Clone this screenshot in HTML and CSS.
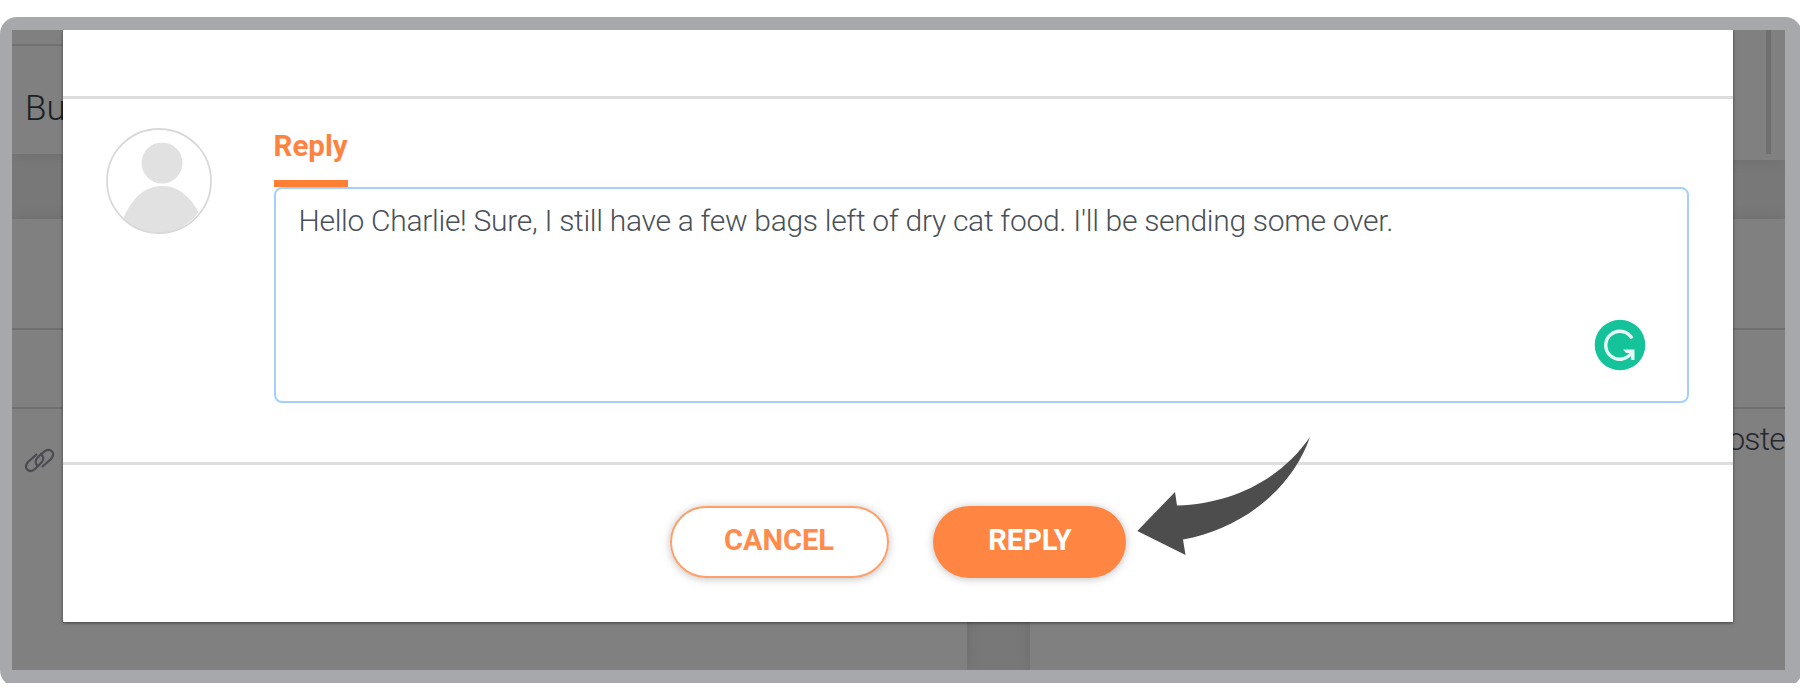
FILE: index.html
```html
<!DOCTYPE html>
<html lang="en">

<head>
    <meta charset="UTF-8">
    <meta name="viewport" content="width=device-width, initial-scale=1.0">
    <title>Reply</title>
    <link rel="stylesheet" href="styles.css">
</head>

<body>
    <div class="wrapper">
        <div class="frame">
            <!-- page behind the dialog -->
            <div class="page">
                <div class="column">
                    <div class="card card-top">
                        <div class="card-title">Bu</div>
                    </div>
                    <div class="card card-list">
                        <div class="list-head"></div>
                        <div class="list-row"></div>
                        <div class="list-body">
                            <svg class="link-icon" width="32" height="26" viewBox="0 0 32 26">
                                <path d="M13 6 L4 14 C-1 20 5 26 11 21 L17 15 C21 11 19 7 16 6" />
                                <path d="M18 19 L27 11 C32 5 27 0 21 3 L14 9 C10 13 12 17 14 18" />
                            </svg>
                        </div>
                    </div>
                </div>
                <div class="column">
                    <div class="card card-side">
                        <div class="scroll"></div>
                    </div>
                    <div class="card card-list">
                        <div class="list-head"></div>
                        <div class="list-row"></div>
                        <div class="list-body right">
                            <span class="posted">oste</span>
                        </div>
                    </div>
                </div>
            </div>

            <div class="modal">
                <div class="modal-header"></div>
                <div class="modal-body">
                    <svg class="avatar" width="106" height="106" viewBox="0 0 106 106">
                        <circle cx="56" cy="35" r="20.5" fill="#e1e1e1" />
                        <path d="M17.500 90 C26 70 39 58 56 58 C73 58 84 69 92.500 84 C83 97 69 105 53 105 C39 105 26 99 17.500 90 Z" fill="#e1e1e1" />
                        <circle cx="53" cy="53" r="52" fill="none" stroke="#d9d9d9" stroke-width="1.800" />
                    </svg>
                    <div class="form">
                        <div class="tab"><span>Reply</span></div>
                        <div class="textarea">
                            <p class="message">Hello Charlie! Sure, I still have a few bags left of dry cat food. I'll be sending some over.</p>
                            <svg class="grammar" width="52" height="52" viewBox="0 0 52 52">
                                <circle cx="26" cy="26" r="25.300" fill="#15c39a" />
                                <path d="M38 19.500 A14 14 0 1 0 38 33" fill="none" stroke="#e6f8f4" stroke-width="3.400" />
                                <path d="M29 30.500 H40.500 V41 H37 V34 H32 Z" fill="#e6f8f4" />
                            </svg>
                        </div>
                    </div>
                </div>
                <div class="modal-footer">
                    <div class="btn btn-cancel"><span>CANCEL</span></div>
                    <div class="btn btn-reply"><span>REPLY</span></div>
                </div>
            </div>
        </div>
        <svg class="arrow" width="176" height="122" viewBox="0 0 176 122">
            <path d="M0.300 94 L38 55 L40 68.500 C96 67 144 42 173 0 C155 52 105 92 46 102.500 L48.500 118 Z" fill="#4d4d4d" />
        </svg>
    </div>
</body>

</html>
```
FILE: styles.css
```css
html,
body {
    margin: 0;
    background-color: #fff;
}

body {
    display: flow-root;
    height: 700px;
    font-family: Roboto, "Liberation Sans", sans-serif;
    overflow: hidden;
}

.wrapper {
    width: 1800px;
    height: 666px;
    margin-top: 17px;
    position: relative;
    overflow: hidden;
}

.frame {
    box-sizing: border-box;
    width: 1802px;
    height: 670px;
    border: solid #a7a8ac;
    border-width: 13px 17px 17px 12.5px;
    border-radius: 17px;
    background-color: #a7a8ac;
    position: relative;
}

/* dimmed page */
.page {
    height: 640px;
    display: grid;
    grid-template-columns: 955px 1fr;
    column-gap: 63px;
    background-color: #787878;
    overflow: hidden;
}

.column {
    display: flex;
    flex-direction: column;
}

.card {
    background-color: #808080;
    box-shadow: 0 0 14px rgba(0, 0, 0, 0.1);
}

.card-top {
    display: flow-root;
    height: 124px;
    margin-bottom: 65px;
}

.card-title {
    margin-top: 14px;
    border-top: 2px solid #727272;
    padding: 42px 0 0 13px;
    font-size: 35px;
    line-height: 42px;
    font-weight: 300;
    color: #1c1f24;
}

.card-side {
    height: 130px;
    margin-bottom: 59px;
    display: flex;
    justify-content: flex-end;
}

.scroll {
    width: 5px;
    height: 124px;
    margin-right: 14px;
    background-color: #6f6f6f;
}

.card-list {
    flex: 1;
}

.list-head {
    height: 109px;
    border-bottom: 2px solid #6f6f6f;
}

.list-row {
    height: 77px;
    border-bottom: 2px solid #6f6f6f;
}

.list-body {
    padding: 39px 0 0 12px;
}

.list-body.right {
    padding: 9px 0 0;
    text-align: right;
}

.link-icon path {
    fill: none;
    stroke: #4a4a52;
    stroke-width: 2.2;
}

.posted {
    font-size: 32px;
    line-height: 42px;
    letter-spacing: -0.8px;
    font-weight: 300;
    color: #26282c;
}

/* dialog */
.modal {
    position: absolute;
    left: 50.5px;
    top: 0;
    width: 1670px;
    height: 592px;
    background-color: #fff;
    box-shadow: 0 1px 3px rgba(0, 0, 0, 0.5);
    clip-path: inset(0 -6px -6px -6px);
}

.modal-header {
    height: 66px;
    border-bottom: 3px solid #dcdcdc;
}

.modal-body {
    box-sizing: border-box;
    height: 366px;
    padding: 28px 44px 0 43px;
    display: flex;
    border-bottom: 3px solid #dedede;
}

.avatar {
    flex: none;
    margin: 1px 62px 0 0;
}

.form {
    width: 1415px;
}

.tab {
    height: 60px;
}

.tab span {
    display: inline-block;
    box-sizing: border-box;
    height: 60px;
    padding-top: 1px;
    border-bottom: 7px solid #ff7f35;
    color: #ff8340;
    font-size: 29.5px;
    line-height: 37px;
    font-weight: 700;
}

.textarea {
    box-sizing: border-box;
    height: 216px;
    border: 2px solid #a4cfff;
    border-radius: 8px;
    padding: 12px 41px 0 23px;
    display: flex;
    flex-direction: column;
    justify-content: space-between;
}

.message {
    margin: 0;
    font-size: 30px;
    line-height: 40px;
    letter-spacing: -0.3px;
    font-weight: 300;
    color: #495057;
    white-space: nowrap;
}

.grammar {
    align-self: flex-end;
    margin-bottom: 30px;
}

.modal-footer {
    padding-top: 41px;
    display: flex;
    justify-content: center;
    gap: 44px;
}

.btn {
    box-sizing: border-box;
    height: 72px;
    border-radius: 36px;
    text-align: center;
    font-size: 29px;
    line-height: 68px;
    font-weight: 700;
    box-shadow: 0 1px 9px rgba(0, 0, 0, 0.25);
}

.btn-cancel {
    width: 219px;
    border: 2px solid #fda06b;
    line-height: 64px;
    color: #ff8c4c;
}

.btn-reply {
    width: 193px;
    padding-left: 2px;
    background-color: #ff8642;
    color: #fff;
}

.arrow {
    position: absolute;
    left: 1137px;
    top: 420px;
}
```
